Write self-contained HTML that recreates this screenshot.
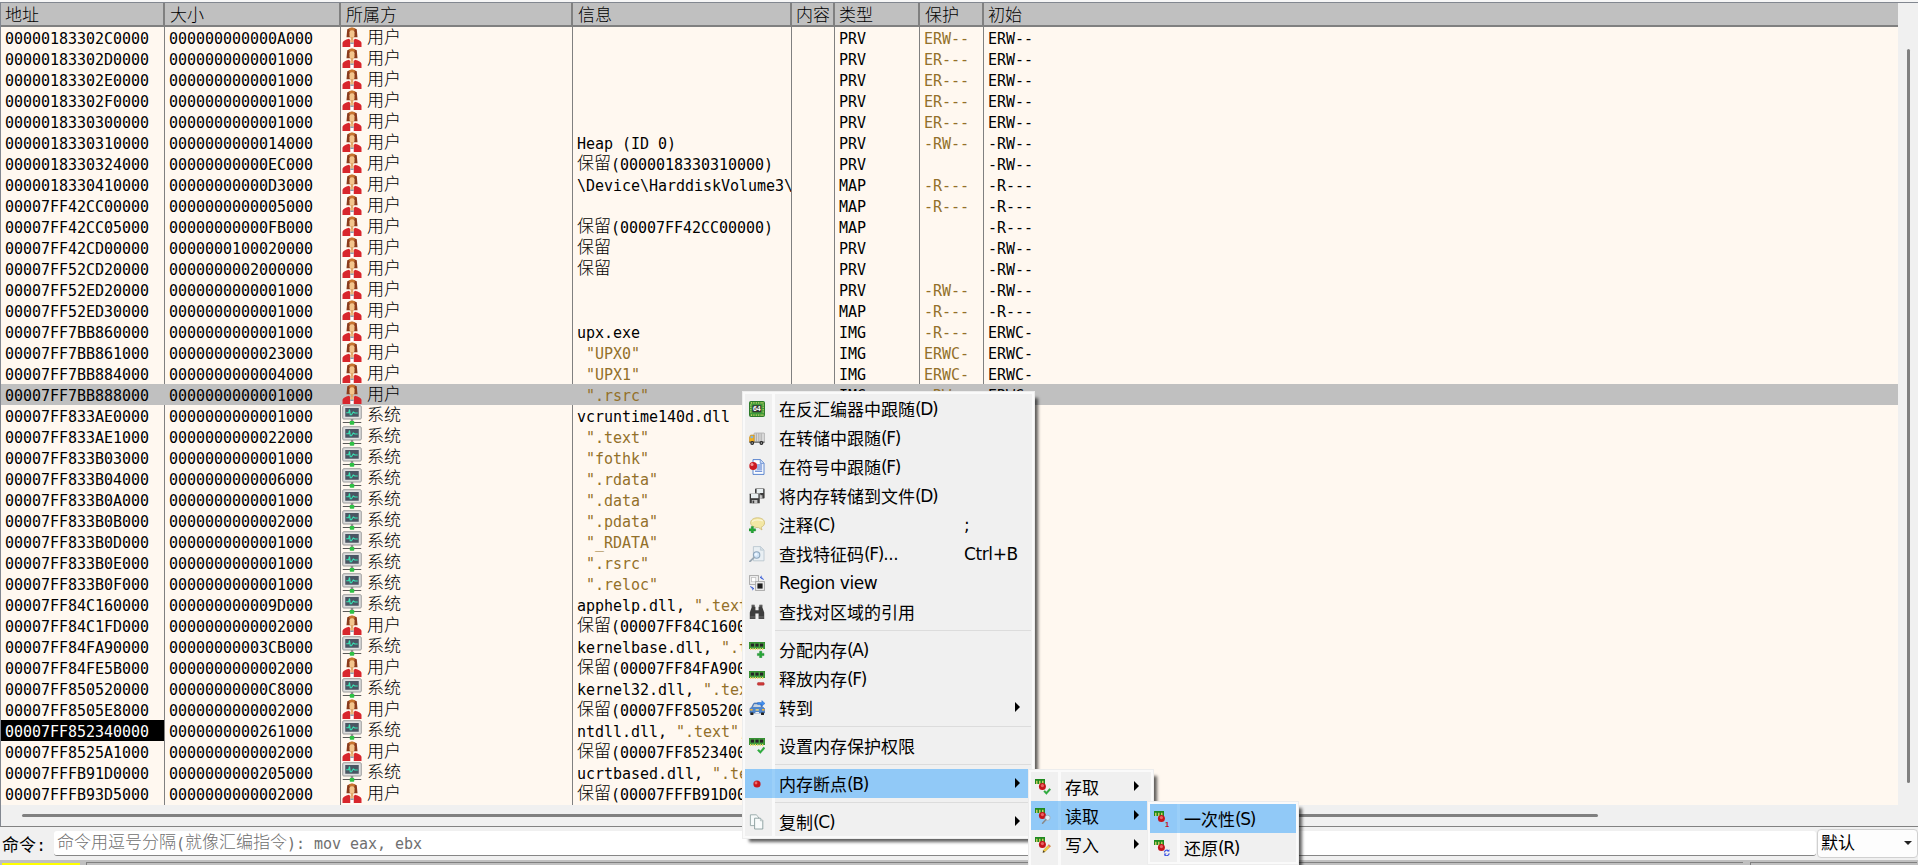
<!DOCTYPE html>
<html lang="zh-CN">
<head>
<meta charset="utf-8">
<title>x64dbg</title>
<style>
*{box-sizing:border-box;margin:0;padding:0}
html,body{width:1918px;height:865px;overflow:hidden;background:#f0f0f0}
body{position:relative;font-family:"DejaVu Sans Mono","Liberation Mono","Noto Sans CJK SC",monospace;font-size:15px;color:#000}
i{font-style:normal}
.c{font-family:"Noto Sans CJK SC",sans-serif;font-size:17px;font-weight:300;letter-spacing:0;line-height:0;position:relative;top:-1px}
#topstrip{position:absolute;left:0;top:0;width:1918px;height:3px;background:#f6f6f6}
#topline{position:absolute;left:0;top:2px;width:1918px;height:1px;background:#828790}
#table{position:absolute;left:0;top:3px;width:1898px;height:802px;background:#fff8f0;overflow:hidden}
#hdr{position:absolute;left:0;top:0;width:1898px;height:22px;background:#c0c0c0}
#hdrline{position:absolute;left:0;top:22px;width:1898px;height:2px;background:#808080}
.hs{position:absolute;top:0;width:2px;height:24px;background:#808080}
.ht{position:absolute;top:0;height:22px;line-height:21px;font-family:"Noto Sans CJK SC",sans-serif;font-size:17px;letter-spacing:0;font-weight:300;white-space:nowrap}
.vs{position:absolute;top:24px;width:1px;height:778px;background:#808080}
#leftb{position:absolute;left:0;top:3px;width:1px;height:824px;background:#828790}
.row{position:absolute;left:0;width:1898px;height:21px;line-height:24px;white-space:nowrap;letter-spacing:-0.03px}
.row.sel{background:#c0c0c0}
.row span{position:absolute;top:0;height:21px;overflow:hidden;padding-left:4px;white-space:pre}
.c0{left:1px;width:163px}
.c1{left:165px;width:175px}
.c2{left:341px;width:231px}
.c3{left:573px;width:218px}
.c4{left:792px;width:42px}
.c5{left:835px;width:84px}
.c6{left:920px;width:63px}
.c7{left:984px;width:914px}
.row span.c2{padding-left:1px}
.row span.sec,.sec{color:#93702a}
.row .c3 span{position:static;padding:0;display:inline;overflow:visible}
.cip{background:#000;color:#fff}
.ic{width:20px;height:20px;vertical-align:top;margin-right:5px;margin-top:0px}
#vsb{position:absolute;left:1898px;top:3px;width:20px;height:823px;background:#f0f0f0}
#vthumb{position:absolute;left:1907px;top:49px;width:3px;height:734px;background:#808080;border-radius:1.5px}
#hsb{position:absolute;left:1px;top:805px;width:1897px;height:21px;background:#f0f0f0}
#hthumb{position:absolute;left:22px;top:814px;width:1576px;height:3px;background:#808080;border-radius:1.5px}
#botline{position:absolute;left:0;top:826px;width:1918px;height:1px;background:#828282}
#cmdlabel{position:absolute;left:2px;top:834px;height:26px;line-height:26px;font-family:"Liberation Mono","Noto Sans CJK SC",sans-serif;font-size:17px;white-space:nowrap}
#cmdinput{position:absolute;left:54px;top:831px;width:1762px;height:25px;background:#fff;border-bottom:1px solid #868686;border-radius:3px;line-height:27px;padding-left:3px;color:#707070;white-space:nowrap;letter-spacing:-0.03px;overflow:hidden}
#combo{position:absolute;left:1817px;top:829px;width:101px;height:29px;background:#fdfdfd;border:1px solid #d0d0d0;border-radius:4px;font-family:"Liberation Sans","Noto Sans CJK SC",sans-serif;font-size:17px;line-height:28px;padding-left:3px}
#combo b{position:absolute;right:5px;top:11px;width:0;height:0;border-left:4px solid transparent;border-right:4px solid transparent;border-top:4px solid #222}
#status{position:absolute;left:0;top:860px;width:1918px;height:5px;background:#c0c0c0}
#sty{position:absolute;left:2px;top:863px;width:78px;height:2px;background:#ffff00}
#stg,#stg2{position:absolute;left:86px;top:862px;width:1657px;height:3px;background:#c0c0c0;border-top:1px solid #808080;border-left:1px solid #808080}
/* menus */
.menu{position:absolute;background:#f0f0f0;border:3px solid #fafafa;outline:0;box-shadow:5px 5px 3px -2px rgba(0,0,0,.62);font-family:"Liberation Sans","Noto Sans CJK SC",sans-serif;font-size:17px;color:#000}
.menu:before{content:"";position:absolute;left:-3px;top:-3px;right:-3px;bottom:-3px;border:1px solid #ededed;pointer-events:none}
.menu .gut{position:absolute;top:0;bottom:0;width:3px;background:#fafafa}
.mi{position:absolute;left:0;right:0;height:29px;line-height:29px;white-space:nowrap}
.mi.hl{background:#91c9f7}
.mi.hl:after{content:"";position:absolute;left:27px;top:0;width:3px;height:29px;background:#9bcff8}
.mi .t{position:absolute;left:34px;top:2px}
.mi .sc{position:absolute;left:219px;top:2px}
.mi .ar{position:absolute;right:12px;top:9px;width:0;height:0;border-top:5px solid transparent;border-bottom:5px solid transparent;border-left:5.5px solid #000}
.mi svg{position:absolute;left:4px;top:7px;width:16px;height:16px}
.ms{position:absolute;left:30px;right:1px;height:1px;background:#dcdcdc}
.lat{font-family:"DejaVu Sans","Liberation Sans",sans-serif;font-size:17px;letter-spacing:-0.4px;line-height:0;position:relative;top:-1.5px}
#stg2{left:1750px;width:167px}
.acc{letter-spacing:-1.3px}
</style>
</head>
<body>
<div id="topstrip"></div><div id="topline"></div>
<div id="table">
<div id="hdr"></div><div id="hdrline"></div>
<div class="hs" style="left:163px"></div><div class="hs" style="left:339px"></div><div class="hs" style="left:571px"></div><div class="hs" style="left:790px"></div><div class="hs" style="left:833px"></div><div class="hs" style="left:918px"></div><div class="hs" style="left:982px"></div>
<div class="ht" style="left:5px">地址</div><div class="ht" style="left:170px">大小</div><div class="ht" style="left:346px">所属方</div><div class="ht" style="left:578px">信息</div><div class="ht" style="left:796px">内容</div><div class="ht" style="left:839px">类型</div><div class="ht" style="left:925px">保护</div><div class="ht" style="left:988px">初始</div>
<div class="vs" style="left:164px"></div><div class="vs" style="left:340px"></div><div class="vs" style="left:572px"></div><div class="vs" style="left:791px"></div><div class="vs" style="left:834px"></div><div class="vs" style="left:919px"></div><div class="vs" style="left:983px"></div>
<div id="rows" style="position:absolute;left:0;top:-3px">
<div class="row" style="top:27px"><span class="c0">00000183302C0000</span><span class="c1">000000000000A000</span><span class="c2"><svg class="ic" viewBox="0 0 16 16"><path d="M4.2 1.8 Q8 -0.8 11.8 1.8 L12.4 8.2 L3.6 8.2 Z" fill="#8a3b1c"/><path d="M5.6 1 Q8 -0.2 10.4 1 L10 3 L6 3 Z" fill="#c8742e"/><rect x="6" y="2.6" width="4" height="6" rx="1.6" fill="#f3c58c"/><rect x="7" y="8" width="2" height="2.4" fill="#e0a868"/><path d="M0.4 16 L0.4 12.6 Q1 10.6 5.6 9.4 L8 12 L10.4 9.4 Q15 10.6 15.6 12.6 L15.6 16 Z" fill="#d8262d"/><path d="M6.6 10.6 L9.4 10.6 L9.4 16 L6.6 16 Z" fill="#ffffff"/><path d="M6.6 10.4 L9.4 10.4 L9.4 12.6 L6.6 12.6 Z" fill="#e9b47a"/><rect x="6.6" y="12.4" width="2.8" height="1.2" fill="#8fa0b0"/></svg><i class="c">用户</i></span><span class="c3"></span><span class="c4"></span><span class="c5">PRV</span><span class="c6 sec">ERW--</span><span class="c7">ERW--</span></div>
<div class="row" style="top:48px"><span class="c0">00000183302D0000</span><span class="c1">0000000000001000</span><span class="c2"><svg class="ic" viewBox="0 0 16 16"><path d="M4.2 1.8 Q8 -0.8 11.8 1.8 L12.4 8.2 L3.6 8.2 Z" fill="#8a3b1c"/><path d="M5.6 1 Q8 -0.2 10.4 1 L10 3 L6 3 Z" fill="#c8742e"/><rect x="6" y="2.6" width="4" height="6" rx="1.6" fill="#f3c58c"/><rect x="7" y="8" width="2" height="2.4" fill="#e0a868"/><path d="M0.4 16 L0.4 12.6 Q1 10.6 5.6 9.4 L8 12 L10.4 9.4 Q15 10.6 15.6 12.6 L15.6 16 Z" fill="#d8262d"/><path d="M6.6 10.6 L9.4 10.6 L9.4 16 L6.6 16 Z" fill="#ffffff"/><path d="M6.6 10.4 L9.4 10.4 L9.4 12.6 L6.6 12.6 Z" fill="#e9b47a"/><rect x="6.6" y="12.4" width="2.8" height="1.2" fill="#8fa0b0"/></svg><i class="c">用户</i></span><span class="c3"></span><span class="c4"></span><span class="c5">PRV</span><span class="c6 sec">ER---</span><span class="c7">ERW--</span></div>
<div class="row" style="top:69px"><span class="c0">00000183302E0000</span><span class="c1">0000000000001000</span><span class="c2"><svg class="ic" viewBox="0 0 16 16"><path d="M4.2 1.8 Q8 -0.8 11.8 1.8 L12.4 8.2 L3.6 8.2 Z" fill="#8a3b1c"/><path d="M5.6 1 Q8 -0.2 10.4 1 L10 3 L6 3 Z" fill="#c8742e"/><rect x="6" y="2.6" width="4" height="6" rx="1.6" fill="#f3c58c"/><rect x="7" y="8" width="2" height="2.4" fill="#e0a868"/><path d="M0.4 16 L0.4 12.6 Q1 10.6 5.6 9.4 L8 12 L10.4 9.4 Q15 10.6 15.6 12.6 L15.6 16 Z" fill="#d8262d"/><path d="M6.6 10.6 L9.4 10.6 L9.4 16 L6.6 16 Z" fill="#ffffff"/><path d="M6.6 10.4 L9.4 10.4 L9.4 12.6 L6.6 12.6 Z" fill="#e9b47a"/><rect x="6.6" y="12.4" width="2.8" height="1.2" fill="#8fa0b0"/></svg><i class="c">用户</i></span><span class="c3"></span><span class="c4"></span><span class="c5">PRV</span><span class="c6 sec">ER---</span><span class="c7">ERW--</span></div>
<div class="row" style="top:90px"><span class="c0">00000183302F0000</span><span class="c1">0000000000001000</span><span class="c2"><svg class="ic" viewBox="0 0 16 16"><path d="M4.2 1.8 Q8 -0.8 11.8 1.8 L12.4 8.2 L3.6 8.2 Z" fill="#8a3b1c"/><path d="M5.6 1 Q8 -0.2 10.4 1 L10 3 L6 3 Z" fill="#c8742e"/><rect x="6" y="2.6" width="4" height="6" rx="1.6" fill="#f3c58c"/><rect x="7" y="8" width="2" height="2.4" fill="#e0a868"/><path d="M0.4 16 L0.4 12.6 Q1 10.6 5.6 9.4 L8 12 L10.4 9.4 Q15 10.6 15.6 12.6 L15.6 16 Z" fill="#d8262d"/><path d="M6.6 10.6 L9.4 10.6 L9.4 16 L6.6 16 Z" fill="#ffffff"/><path d="M6.6 10.4 L9.4 10.4 L9.4 12.6 L6.6 12.6 Z" fill="#e9b47a"/><rect x="6.6" y="12.4" width="2.8" height="1.2" fill="#8fa0b0"/></svg><i class="c">用户</i></span><span class="c3"></span><span class="c4"></span><span class="c5">PRV</span><span class="c6 sec">ER---</span><span class="c7">ERW--</span></div>
<div class="row" style="top:111px"><span class="c0">0000018330300000</span><span class="c1">0000000000001000</span><span class="c2"><svg class="ic" viewBox="0 0 16 16"><path d="M4.2 1.8 Q8 -0.8 11.8 1.8 L12.4 8.2 L3.6 8.2 Z" fill="#8a3b1c"/><path d="M5.6 1 Q8 -0.2 10.4 1 L10 3 L6 3 Z" fill="#c8742e"/><rect x="6" y="2.6" width="4" height="6" rx="1.6" fill="#f3c58c"/><rect x="7" y="8" width="2" height="2.4" fill="#e0a868"/><path d="M0.4 16 L0.4 12.6 Q1 10.6 5.6 9.4 L8 12 L10.4 9.4 Q15 10.6 15.6 12.6 L15.6 16 Z" fill="#d8262d"/><path d="M6.6 10.6 L9.4 10.6 L9.4 16 L6.6 16 Z" fill="#ffffff"/><path d="M6.6 10.4 L9.4 10.4 L9.4 12.6 L6.6 12.6 Z" fill="#e9b47a"/><rect x="6.6" y="12.4" width="2.8" height="1.2" fill="#8fa0b0"/></svg><i class="c">用户</i></span><span class="c3"></span><span class="c4"></span><span class="c5">PRV</span><span class="c6 sec">ER---</span><span class="c7">ERW--</span></div>
<div class="row" style="top:132px"><span class="c0">0000018330310000</span><span class="c1">0000000000014000</span><span class="c2"><svg class="ic" viewBox="0 0 16 16"><path d="M4.2 1.8 Q8 -0.8 11.8 1.8 L12.4 8.2 L3.6 8.2 Z" fill="#8a3b1c"/><path d="M5.6 1 Q8 -0.2 10.4 1 L10 3 L6 3 Z" fill="#c8742e"/><rect x="6" y="2.6" width="4" height="6" rx="1.6" fill="#f3c58c"/><rect x="7" y="8" width="2" height="2.4" fill="#e0a868"/><path d="M0.4 16 L0.4 12.6 Q1 10.6 5.6 9.4 L8 12 L10.4 9.4 Q15 10.6 15.6 12.6 L15.6 16 Z" fill="#d8262d"/><path d="M6.6 10.6 L9.4 10.6 L9.4 16 L6.6 16 Z" fill="#ffffff"/><path d="M6.6 10.4 L9.4 10.4 L9.4 12.6 L6.6 12.6 Z" fill="#e9b47a"/><rect x="6.6" y="12.4" width="2.8" height="1.2" fill="#8fa0b0"/></svg><i class="c">用户</i></span><span class="c3">Heap (ID 0)</span><span class="c4"></span><span class="c5">PRV</span><span class="c6 sec">-RW--</span><span class="c7">-RW--</span></div>
<div class="row" style="top:153px"><span class="c0">0000018330324000</span><span class="c1">00000000000EC000</span><span class="c2"><svg class="ic" viewBox="0 0 16 16"><path d="M4.2 1.8 Q8 -0.8 11.8 1.8 L12.4 8.2 L3.6 8.2 Z" fill="#8a3b1c"/><path d="M5.6 1 Q8 -0.2 10.4 1 L10 3 L6 3 Z" fill="#c8742e"/><rect x="6" y="2.6" width="4" height="6" rx="1.6" fill="#f3c58c"/><rect x="7" y="8" width="2" height="2.4" fill="#e0a868"/><path d="M0.4 16 L0.4 12.6 Q1 10.6 5.6 9.4 L8 12 L10.4 9.4 Q15 10.6 15.6 12.6 L15.6 16 Z" fill="#d8262d"/><path d="M6.6 10.6 L9.4 10.6 L9.4 16 L6.6 16 Z" fill="#ffffff"/><path d="M6.6 10.4 L9.4 10.4 L9.4 12.6 L6.6 12.6 Z" fill="#e9b47a"/><rect x="6.6" y="12.4" width="2.8" height="1.2" fill="#8fa0b0"/></svg><i class="c">用户</i></span><span class="c3"><i class="c">保留</i>(0000018330310000)</span><span class="c4"></span><span class="c5">PRV</span><span class="c6 sec"></span><span class="c7">-RW--</span></div>
<div class="row" style="top:174px"><span class="c0">0000018330410000</span><span class="c1">00000000000D3000</span><span class="c2"><svg class="ic" viewBox="0 0 16 16"><path d="M4.2 1.8 Q8 -0.8 11.8 1.8 L12.4 8.2 L3.6 8.2 Z" fill="#8a3b1c"/><path d="M5.6 1 Q8 -0.2 10.4 1 L10 3 L6 3 Z" fill="#c8742e"/><rect x="6" y="2.6" width="4" height="6" rx="1.6" fill="#f3c58c"/><rect x="7" y="8" width="2" height="2.4" fill="#e0a868"/><path d="M0.4 16 L0.4 12.6 Q1 10.6 5.6 9.4 L8 12 L10.4 9.4 Q15 10.6 15.6 12.6 L15.6 16 Z" fill="#d8262d"/><path d="M6.6 10.6 L9.4 10.6 L9.4 16 L6.6 16 Z" fill="#ffffff"/><path d="M6.6 10.4 L9.4 10.4 L9.4 12.6 L6.6 12.6 Z" fill="#e9b47a"/><rect x="6.6" y="12.4" width="2.8" height="1.2" fill="#8fa0b0"/></svg><i class="c">用户</i></span><span class="c3">\Device\HarddiskVolume3\</span><span class="c4"></span><span class="c5">MAP</span><span class="c6 sec">-R---</span><span class="c7">-R---</span></div>
<div class="row" style="top:195px"><span class="c0">00007FF42CC00000</span><span class="c1">0000000000005000</span><span class="c2"><svg class="ic" viewBox="0 0 16 16"><path d="M4.2 1.8 Q8 -0.8 11.8 1.8 L12.4 8.2 L3.6 8.2 Z" fill="#8a3b1c"/><path d="M5.6 1 Q8 -0.2 10.4 1 L10 3 L6 3 Z" fill="#c8742e"/><rect x="6" y="2.6" width="4" height="6" rx="1.6" fill="#f3c58c"/><rect x="7" y="8" width="2" height="2.4" fill="#e0a868"/><path d="M0.4 16 L0.4 12.6 Q1 10.6 5.6 9.4 L8 12 L10.4 9.4 Q15 10.6 15.6 12.6 L15.6 16 Z" fill="#d8262d"/><path d="M6.6 10.6 L9.4 10.6 L9.4 16 L6.6 16 Z" fill="#ffffff"/><path d="M6.6 10.4 L9.4 10.4 L9.4 12.6 L6.6 12.6 Z" fill="#e9b47a"/><rect x="6.6" y="12.4" width="2.8" height="1.2" fill="#8fa0b0"/></svg><i class="c">用户</i></span><span class="c3"></span><span class="c4"></span><span class="c5">MAP</span><span class="c6 sec">-R---</span><span class="c7">-R---</span></div>
<div class="row" style="top:216px"><span class="c0">00007FF42CC05000</span><span class="c1">00000000000FB000</span><span class="c2"><svg class="ic" viewBox="0 0 16 16"><path d="M4.2 1.8 Q8 -0.8 11.8 1.8 L12.4 8.2 L3.6 8.2 Z" fill="#8a3b1c"/><path d="M5.6 1 Q8 -0.2 10.4 1 L10 3 L6 3 Z" fill="#c8742e"/><rect x="6" y="2.6" width="4" height="6" rx="1.6" fill="#f3c58c"/><rect x="7" y="8" width="2" height="2.4" fill="#e0a868"/><path d="M0.4 16 L0.4 12.6 Q1 10.6 5.6 9.4 L8 12 L10.4 9.4 Q15 10.6 15.6 12.6 L15.6 16 Z" fill="#d8262d"/><path d="M6.6 10.6 L9.4 10.6 L9.4 16 L6.6 16 Z" fill="#ffffff"/><path d="M6.6 10.4 L9.4 10.4 L9.4 12.6 L6.6 12.6 Z" fill="#e9b47a"/><rect x="6.6" y="12.4" width="2.8" height="1.2" fill="#8fa0b0"/></svg><i class="c">用户</i></span><span class="c3"><i class="c">保留</i>(00007FF42CC00000)</span><span class="c4"></span><span class="c5">MAP</span><span class="c6 sec"></span><span class="c7">-R---</span></div>
<div class="row" style="top:237px"><span class="c0">00007FF42CD00000</span><span class="c1">0000000100020000</span><span class="c2"><svg class="ic" viewBox="0 0 16 16"><path d="M4.2 1.8 Q8 -0.8 11.8 1.8 L12.4 8.2 L3.6 8.2 Z" fill="#8a3b1c"/><path d="M5.6 1 Q8 -0.2 10.4 1 L10 3 L6 3 Z" fill="#c8742e"/><rect x="6" y="2.6" width="4" height="6" rx="1.6" fill="#f3c58c"/><rect x="7" y="8" width="2" height="2.4" fill="#e0a868"/><path d="M0.4 16 L0.4 12.6 Q1 10.6 5.6 9.4 L8 12 L10.4 9.4 Q15 10.6 15.6 12.6 L15.6 16 Z" fill="#d8262d"/><path d="M6.6 10.6 L9.4 10.6 L9.4 16 L6.6 16 Z" fill="#ffffff"/><path d="M6.6 10.4 L9.4 10.4 L9.4 12.6 L6.6 12.6 Z" fill="#e9b47a"/><rect x="6.6" y="12.4" width="2.8" height="1.2" fill="#8fa0b0"/></svg><i class="c">用户</i></span><span class="c3"><i class="c">保留</i></span><span class="c4"></span><span class="c5">PRV</span><span class="c6 sec"></span><span class="c7">-RW--</span></div>
<div class="row" style="top:258px"><span class="c0">00007FF52CD20000</span><span class="c1">0000000002000000</span><span class="c2"><svg class="ic" viewBox="0 0 16 16"><path d="M4.2 1.8 Q8 -0.8 11.8 1.8 L12.4 8.2 L3.6 8.2 Z" fill="#8a3b1c"/><path d="M5.6 1 Q8 -0.2 10.4 1 L10 3 L6 3 Z" fill="#c8742e"/><rect x="6" y="2.6" width="4" height="6" rx="1.6" fill="#f3c58c"/><rect x="7" y="8" width="2" height="2.4" fill="#e0a868"/><path d="M0.4 16 L0.4 12.6 Q1 10.6 5.6 9.4 L8 12 L10.4 9.4 Q15 10.6 15.6 12.6 L15.6 16 Z" fill="#d8262d"/><path d="M6.6 10.6 L9.4 10.6 L9.4 16 L6.6 16 Z" fill="#ffffff"/><path d="M6.6 10.4 L9.4 10.4 L9.4 12.6 L6.6 12.6 Z" fill="#e9b47a"/><rect x="6.6" y="12.4" width="2.8" height="1.2" fill="#8fa0b0"/></svg><i class="c">用户</i></span><span class="c3"><i class="c">保留</i></span><span class="c4"></span><span class="c5">PRV</span><span class="c6 sec"></span><span class="c7">-RW--</span></div>
<div class="row" style="top:279px"><span class="c0">00007FF52ED20000</span><span class="c1">0000000000001000</span><span class="c2"><svg class="ic" viewBox="0 0 16 16"><path d="M4.2 1.8 Q8 -0.8 11.8 1.8 L12.4 8.2 L3.6 8.2 Z" fill="#8a3b1c"/><path d="M5.6 1 Q8 -0.2 10.4 1 L10 3 L6 3 Z" fill="#c8742e"/><rect x="6" y="2.6" width="4" height="6" rx="1.6" fill="#f3c58c"/><rect x="7" y="8" width="2" height="2.4" fill="#e0a868"/><path d="M0.4 16 L0.4 12.6 Q1 10.6 5.6 9.4 L8 12 L10.4 9.4 Q15 10.6 15.6 12.6 L15.6 16 Z" fill="#d8262d"/><path d="M6.6 10.6 L9.4 10.6 L9.4 16 L6.6 16 Z" fill="#ffffff"/><path d="M6.6 10.4 L9.4 10.4 L9.4 12.6 L6.6 12.6 Z" fill="#e9b47a"/><rect x="6.6" y="12.4" width="2.8" height="1.2" fill="#8fa0b0"/></svg><i class="c">用户</i></span><span class="c3"></span><span class="c4"></span><span class="c5">PRV</span><span class="c6 sec">-RW--</span><span class="c7">-RW--</span></div>
<div class="row" style="top:300px"><span class="c0">00007FF52ED30000</span><span class="c1">0000000000001000</span><span class="c2"><svg class="ic" viewBox="0 0 16 16"><path d="M4.2 1.8 Q8 -0.8 11.8 1.8 L12.4 8.2 L3.6 8.2 Z" fill="#8a3b1c"/><path d="M5.6 1 Q8 -0.2 10.4 1 L10 3 L6 3 Z" fill="#c8742e"/><rect x="6" y="2.6" width="4" height="6" rx="1.6" fill="#f3c58c"/><rect x="7" y="8" width="2" height="2.4" fill="#e0a868"/><path d="M0.4 16 L0.4 12.6 Q1 10.6 5.6 9.4 L8 12 L10.4 9.4 Q15 10.6 15.6 12.6 L15.6 16 Z" fill="#d8262d"/><path d="M6.6 10.6 L9.4 10.6 L9.4 16 L6.6 16 Z" fill="#ffffff"/><path d="M6.6 10.4 L9.4 10.4 L9.4 12.6 L6.6 12.6 Z" fill="#e9b47a"/><rect x="6.6" y="12.4" width="2.8" height="1.2" fill="#8fa0b0"/></svg><i class="c">用户</i></span><span class="c3"></span><span class="c4"></span><span class="c5">MAP</span><span class="c6 sec">-R---</span><span class="c7">-R---</span></div>
<div class="row" style="top:321px"><span class="c0">00007FF7BB860000</span><span class="c1">0000000000001000</span><span class="c2"><svg class="ic" viewBox="0 0 16 16"><path d="M4.2 1.8 Q8 -0.8 11.8 1.8 L12.4 8.2 L3.6 8.2 Z" fill="#8a3b1c"/><path d="M5.6 1 Q8 -0.2 10.4 1 L10 3 L6 3 Z" fill="#c8742e"/><rect x="6" y="2.6" width="4" height="6" rx="1.6" fill="#f3c58c"/><rect x="7" y="8" width="2" height="2.4" fill="#e0a868"/><path d="M0.4 16 L0.4 12.6 Q1 10.6 5.6 9.4 L8 12 L10.4 9.4 Q15 10.6 15.6 12.6 L15.6 16 Z" fill="#d8262d"/><path d="M6.6 10.6 L9.4 10.6 L9.4 16 L6.6 16 Z" fill="#ffffff"/><path d="M6.6 10.4 L9.4 10.4 L9.4 12.6 L6.6 12.6 Z" fill="#e9b47a"/><rect x="6.6" y="12.4" width="2.8" height="1.2" fill="#8fa0b0"/></svg><i class="c">用户</i></span><span class="c3">upx.exe</span><span class="c4"></span><span class="c5">IMG</span><span class="c6 sec">-R---</span><span class="c7">ERWC-</span></div>
<div class="row" style="top:342px"><span class="c0">00007FF7BB861000</span><span class="c1">0000000000023000</span><span class="c2"><svg class="ic" viewBox="0 0 16 16"><path d="M4.2 1.8 Q8 -0.8 11.8 1.8 L12.4 8.2 L3.6 8.2 Z" fill="#8a3b1c"/><path d="M5.6 1 Q8 -0.2 10.4 1 L10 3 L6 3 Z" fill="#c8742e"/><rect x="6" y="2.6" width="4" height="6" rx="1.6" fill="#f3c58c"/><rect x="7" y="8" width="2" height="2.4" fill="#e0a868"/><path d="M0.4 16 L0.4 12.6 Q1 10.6 5.6 9.4 L8 12 L10.4 9.4 Q15 10.6 15.6 12.6 L15.6 16 Z" fill="#d8262d"/><path d="M6.6 10.6 L9.4 10.6 L9.4 16 L6.6 16 Z" fill="#ffffff"/><path d="M6.6 10.4 L9.4 10.4 L9.4 12.6 L6.6 12.6 Z" fill="#e9b47a"/><rect x="6.6" y="12.4" width="2.8" height="1.2" fill="#8fa0b0"/></svg><i class="c">用户</i></span><span class="c3">&nbsp;<span class="sec">"UPX0"</span></span><span class="c4"></span><span class="c5">IMG</span><span class="c6 sec">ERWC-</span><span class="c7">ERWC-</span></div>
<div class="row" style="top:363px"><span class="c0">00007FF7BB884000</span><span class="c1">0000000000004000</span><span class="c2"><svg class="ic" viewBox="0 0 16 16"><path d="M4.2 1.8 Q8 -0.8 11.8 1.8 L12.4 8.2 L3.6 8.2 Z" fill="#8a3b1c"/><path d="M5.6 1 Q8 -0.2 10.4 1 L10 3 L6 3 Z" fill="#c8742e"/><rect x="6" y="2.6" width="4" height="6" rx="1.6" fill="#f3c58c"/><rect x="7" y="8" width="2" height="2.4" fill="#e0a868"/><path d="M0.4 16 L0.4 12.6 Q1 10.6 5.6 9.4 L8 12 L10.4 9.4 Q15 10.6 15.6 12.6 L15.6 16 Z" fill="#d8262d"/><path d="M6.6 10.6 L9.4 10.6 L9.4 16 L6.6 16 Z" fill="#ffffff"/><path d="M6.6 10.4 L9.4 10.4 L9.4 12.6 L6.6 12.6 Z" fill="#e9b47a"/><rect x="6.6" y="12.4" width="2.8" height="1.2" fill="#8fa0b0"/></svg><i class="c">用户</i></span><span class="c3">&nbsp;<span class="sec">"UPX1"</span></span><span class="c4"></span><span class="c5">IMG</span><span class="c6 sec">ERWC-</span><span class="c7">ERWC-</span></div>
<div class="row sel" style="top:384px"><span class="c0">00007FF7BB888000</span><span class="c1">0000000000001000</span><span class="c2"><svg class="ic" viewBox="0 0 16 16"><path d="M4.2 1.8 Q8 -0.8 11.8 1.8 L12.4 8.2 L3.6 8.2 Z" fill="#8a3b1c"/><path d="M5.6 1 Q8 -0.2 10.4 1 L10 3 L6 3 Z" fill="#c8742e"/><rect x="6" y="2.6" width="4" height="6" rx="1.6" fill="#f3c58c"/><rect x="7" y="8" width="2" height="2.4" fill="#e0a868"/><path d="M0.4 16 L0.4 12.6 Q1 10.6 5.6 9.4 L8 12 L10.4 9.4 Q15 10.6 15.6 12.6 L15.6 16 Z" fill="#d8262d"/><path d="M6.6 10.6 L9.4 10.6 L9.4 16 L6.6 16 Z" fill="#ffffff"/><path d="M6.6 10.4 L9.4 10.4 L9.4 12.6 L6.6 12.6 Z" fill="#e9b47a"/><rect x="6.6" y="12.4" width="2.8" height="1.2" fill="#8fa0b0"/></svg><i class="c">用户</i></span><span class="c3">&nbsp;<span class="sec">".rsrc"</span></span><span class="c4"></span><span class="c5">IMG</span><span class="c6 sec">-RW--</span><span class="c7">ERWC-</span></div>
<div class="row" style="top:405px"><span class="c0">00007FF833AE0000</span><span class="c1">0000000000001000</span><span class="c2"><svg class="ic" viewBox="0 0 16 16"><rect x="0.6" y="0.6" width="14.8" height="10.6" rx="0.8" fill="#dedede" stroke="#9a9a9a" stroke-width="0.8"/><rect x="2.6" y="2.4" width="10.8" height="7" fill="#4b5563"/><path d="M3.4 6.2 L5.4 6.2 L6 3.6 L6.6 7.8 L7.6 7.8 L9 5.6 L10.2 6.4 L12.6 6.4" fill="none" stroke="#38e2b4" stroke-width="0.9"/><rect x="7" y="11.2" width="2" height="2" fill="#8c8c8c"/><rect x="0.6" y="13.7" width="14.8" height="0.7" fill="#444"/><rect x="6.2" y="12.8" width="3.6" height="3" rx="0.6" fill="#2fc145"/></svg><i class="c">系统</i></span><span class="c3">vcruntime140d.dll</span><span class="c4"></span><span class="c5">IMG</span><span class="c6 sec">-R---</span><span class="c7">ERWC-</span></div>
<div class="row" style="top:426px"><span class="c0">00007FF833AE1000</span><span class="c1">0000000000022000</span><span class="c2"><svg class="ic" viewBox="0 0 16 16"><rect x="0.6" y="0.6" width="14.8" height="10.6" rx="0.8" fill="#dedede" stroke="#9a9a9a" stroke-width="0.8"/><rect x="2.6" y="2.4" width="10.8" height="7" fill="#4b5563"/><path d="M3.4 6.2 L5.4 6.2 L6 3.6 L6.6 7.8 L7.6 7.8 L9 5.6 L10.2 6.4 L12.6 6.4" fill="none" stroke="#38e2b4" stroke-width="0.9"/><rect x="7" y="11.2" width="2" height="2" fill="#8c8c8c"/><rect x="0.6" y="13.7" width="14.8" height="0.7" fill="#444"/><rect x="6.2" y="12.8" width="3.6" height="3" rx="0.6" fill="#2fc145"/></svg><i class="c">系统</i></span><span class="c3">&nbsp;<span class="sec">".text"</span></span><span class="c4"></span><span class="c5">IMG</span><span class="c6 sec">ER---</span><span class="c7">ERWC-</span></div>
<div class="row" style="top:447px"><span class="c0">00007FF833B03000</span><span class="c1">0000000000001000</span><span class="c2"><svg class="ic" viewBox="0 0 16 16"><rect x="0.6" y="0.6" width="14.8" height="10.6" rx="0.8" fill="#dedede" stroke="#9a9a9a" stroke-width="0.8"/><rect x="2.6" y="2.4" width="10.8" height="7" fill="#4b5563"/><path d="M3.4 6.2 L5.4 6.2 L6 3.6 L6.6 7.8 L7.6 7.8 L9 5.6 L10.2 6.4 L12.6 6.4" fill="none" stroke="#38e2b4" stroke-width="0.9"/><rect x="7" y="11.2" width="2" height="2" fill="#8c8c8c"/><rect x="0.6" y="13.7" width="14.8" height="0.7" fill="#444"/><rect x="6.2" y="12.8" width="3.6" height="3" rx="0.6" fill="#2fc145"/></svg><i class="c">系统</i></span><span class="c3">&nbsp;<span class="sec">"fothk"</span></span><span class="c4"></span><span class="c5">IMG</span><span class="c6 sec">ER---</span><span class="c7">ERWC-</span></div>
<div class="row" style="top:468px"><span class="c0">00007FF833B04000</span><span class="c1">0000000000006000</span><span class="c2"><svg class="ic" viewBox="0 0 16 16"><rect x="0.6" y="0.6" width="14.8" height="10.6" rx="0.8" fill="#dedede" stroke="#9a9a9a" stroke-width="0.8"/><rect x="2.6" y="2.4" width="10.8" height="7" fill="#4b5563"/><path d="M3.4 6.2 L5.4 6.2 L6 3.6 L6.6 7.8 L7.6 7.8 L9 5.6 L10.2 6.4 L12.6 6.4" fill="none" stroke="#38e2b4" stroke-width="0.9"/><rect x="7" y="11.2" width="2" height="2" fill="#8c8c8c"/><rect x="0.6" y="13.7" width="14.8" height="0.7" fill="#444"/><rect x="6.2" y="12.8" width="3.6" height="3" rx="0.6" fill="#2fc145"/></svg><i class="c">系统</i></span><span class="c3">&nbsp;<span class="sec">".rdata"</span></span><span class="c4"></span><span class="c5">IMG</span><span class="c6 sec">-R---</span><span class="c7">ERWC-</span></div>
<div class="row" style="top:489px"><span class="c0">00007FF833B0A000</span><span class="c1">0000000000001000</span><span class="c2"><svg class="ic" viewBox="0 0 16 16"><rect x="0.6" y="0.6" width="14.8" height="10.6" rx="0.8" fill="#dedede" stroke="#9a9a9a" stroke-width="0.8"/><rect x="2.6" y="2.4" width="10.8" height="7" fill="#4b5563"/><path d="M3.4 6.2 L5.4 6.2 L6 3.6 L6.6 7.8 L7.6 7.8 L9 5.6 L10.2 6.4 L12.6 6.4" fill="none" stroke="#38e2b4" stroke-width="0.9"/><rect x="7" y="11.2" width="2" height="2" fill="#8c8c8c"/><rect x="0.6" y="13.7" width="14.8" height="0.7" fill="#444"/><rect x="6.2" y="12.8" width="3.6" height="3" rx="0.6" fill="#2fc145"/></svg><i class="c">系统</i></span><span class="c3">&nbsp;<span class="sec">".data"</span></span><span class="c4"></span><span class="c5">IMG</span><span class="c6 sec">-RW--</span><span class="c7">ERWC-</span></div>
<div class="row" style="top:510px"><span class="c0">00007FF833B0B000</span><span class="c1">0000000000002000</span><span class="c2"><svg class="ic" viewBox="0 0 16 16"><rect x="0.6" y="0.6" width="14.8" height="10.6" rx="0.8" fill="#dedede" stroke="#9a9a9a" stroke-width="0.8"/><rect x="2.6" y="2.4" width="10.8" height="7" fill="#4b5563"/><path d="M3.4 6.2 L5.4 6.2 L6 3.6 L6.6 7.8 L7.6 7.8 L9 5.6 L10.2 6.4 L12.6 6.4" fill="none" stroke="#38e2b4" stroke-width="0.9"/><rect x="7" y="11.2" width="2" height="2" fill="#8c8c8c"/><rect x="0.6" y="13.7" width="14.8" height="0.7" fill="#444"/><rect x="6.2" y="12.8" width="3.6" height="3" rx="0.6" fill="#2fc145"/></svg><i class="c">系统</i></span><span class="c3">&nbsp;<span class="sec">".pdata"</span></span><span class="c4"></span><span class="c5">IMG</span><span class="c6 sec">-R---</span><span class="c7">ERWC-</span></div>
<div class="row" style="top:531px"><span class="c0">00007FF833B0D000</span><span class="c1">0000000000001000</span><span class="c2"><svg class="ic" viewBox="0 0 16 16"><rect x="0.6" y="0.6" width="14.8" height="10.6" rx="0.8" fill="#dedede" stroke="#9a9a9a" stroke-width="0.8"/><rect x="2.6" y="2.4" width="10.8" height="7" fill="#4b5563"/><path d="M3.4 6.2 L5.4 6.2 L6 3.6 L6.6 7.8 L7.6 7.8 L9 5.6 L10.2 6.4 L12.6 6.4" fill="none" stroke="#38e2b4" stroke-width="0.9"/><rect x="7" y="11.2" width="2" height="2" fill="#8c8c8c"/><rect x="0.6" y="13.7" width="14.8" height="0.7" fill="#444"/><rect x="6.2" y="12.8" width="3.6" height="3" rx="0.6" fill="#2fc145"/></svg><i class="c">系统</i></span><span class="c3">&nbsp;<span class="sec">"_RDATA"</span></span><span class="c4"></span><span class="c5">IMG</span><span class="c6 sec">-R---</span><span class="c7">ERWC-</span></div>
<div class="row" style="top:552px"><span class="c0">00007FF833B0E000</span><span class="c1">0000000000001000</span><span class="c2"><svg class="ic" viewBox="0 0 16 16"><rect x="0.6" y="0.6" width="14.8" height="10.6" rx="0.8" fill="#dedede" stroke="#9a9a9a" stroke-width="0.8"/><rect x="2.6" y="2.4" width="10.8" height="7" fill="#4b5563"/><path d="M3.4 6.2 L5.4 6.2 L6 3.6 L6.6 7.8 L7.6 7.8 L9 5.6 L10.2 6.4 L12.6 6.4" fill="none" stroke="#38e2b4" stroke-width="0.9"/><rect x="7" y="11.2" width="2" height="2" fill="#8c8c8c"/><rect x="0.6" y="13.7" width="14.8" height="0.7" fill="#444"/><rect x="6.2" y="12.8" width="3.6" height="3" rx="0.6" fill="#2fc145"/></svg><i class="c">系统</i></span><span class="c3">&nbsp;<span class="sec">".rsrc"</span></span><span class="c4"></span><span class="c5">IMG</span><span class="c6 sec">-R---</span><span class="c7">ERWC-</span></div>
<div class="row" style="top:573px"><span class="c0">00007FF833B0F000</span><span class="c1">0000000000001000</span><span class="c2"><svg class="ic" viewBox="0 0 16 16"><rect x="0.6" y="0.6" width="14.8" height="10.6" rx="0.8" fill="#dedede" stroke="#9a9a9a" stroke-width="0.8"/><rect x="2.6" y="2.4" width="10.8" height="7" fill="#4b5563"/><path d="M3.4 6.2 L5.4 6.2 L6 3.6 L6.6 7.8 L7.6 7.8 L9 5.6 L10.2 6.4 L12.6 6.4" fill="none" stroke="#38e2b4" stroke-width="0.9"/><rect x="7" y="11.2" width="2" height="2" fill="#8c8c8c"/><rect x="0.6" y="13.7" width="14.8" height="0.7" fill="#444"/><rect x="6.2" y="12.8" width="3.6" height="3" rx="0.6" fill="#2fc145"/></svg><i class="c">系统</i></span><span class="c3">&nbsp;<span class="sec">".reloc"</span></span><span class="c4"></span><span class="c5">IMG</span><span class="c6 sec">-R---</span><span class="c7">ERWC-</span></div>
<div class="row" style="top:594px"><span class="c0">00007FF84C160000</span><span class="c1">000000000009D000</span><span class="c2"><svg class="ic" viewBox="0 0 16 16"><rect x="0.6" y="0.6" width="14.8" height="10.6" rx="0.8" fill="#dedede" stroke="#9a9a9a" stroke-width="0.8"/><rect x="2.6" y="2.4" width="10.8" height="7" fill="#4b5563"/><path d="M3.4 6.2 L5.4 6.2 L6 3.6 L6.6 7.8 L7.6 7.8 L9 5.6 L10.2 6.4 L12.6 6.4" fill="none" stroke="#38e2b4" stroke-width="0.9"/><rect x="7" y="11.2" width="2" height="2" fill="#8c8c8c"/><rect x="0.6" y="13.7" width="14.8" height="0.7" fill="#444"/><rect x="6.2" y="12.8" width="3.6" height="3" rx="0.6" fill="#2fc145"/></svg><i class="c">系统</i></span><span class="c3">apphelp.dll,&nbsp;<span class="sec">".text"</span></span><span class="c4"></span><span class="c5">IMG</span><span class="c6 sec">ER---</span><span class="c7">ERWC-</span></div>
<div class="row" style="top:615px"><span class="c0">00007FF84C1FD000</span><span class="c1">0000000000002000</span><span class="c2"><svg class="ic" viewBox="0 0 16 16"><path d="M4.2 1.8 Q8 -0.8 11.8 1.8 L12.4 8.2 L3.6 8.2 Z" fill="#8a3b1c"/><path d="M5.6 1 Q8 -0.2 10.4 1 L10 3 L6 3 Z" fill="#c8742e"/><rect x="6" y="2.6" width="4" height="6" rx="1.6" fill="#f3c58c"/><rect x="7" y="8" width="2" height="2.4" fill="#e0a868"/><path d="M0.4 16 L0.4 12.6 Q1 10.6 5.6 9.4 L8 12 L10.4 9.4 Q15 10.6 15.6 12.6 L15.6 16 Z" fill="#d8262d"/><path d="M6.6 10.6 L9.4 10.6 L9.4 16 L6.6 16 Z" fill="#ffffff"/><path d="M6.6 10.4 L9.4 10.4 L9.4 12.6 L6.6 12.6 Z" fill="#e9b47a"/><rect x="6.6" y="12.4" width="2.8" height="1.2" fill="#8fa0b0"/></svg><i class="c">用户</i></span><span class="c3"><i class="c">保留</i>(00007FF84C160000)</span><span class="c4"></span><span class="c5">IMG</span><span class="c6 sec"></span><span class="c7">ERWC-</span></div>
<div class="row" style="top:636px"><span class="c0">00007FF84FA90000</span><span class="c1">00000000003CB000</span><span class="c2"><svg class="ic" viewBox="0 0 16 16"><rect x="0.6" y="0.6" width="14.8" height="10.6" rx="0.8" fill="#dedede" stroke="#9a9a9a" stroke-width="0.8"/><rect x="2.6" y="2.4" width="10.8" height="7" fill="#4b5563"/><path d="M3.4 6.2 L5.4 6.2 L6 3.6 L6.6 7.8 L7.6 7.8 L9 5.6 L10.2 6.4 L12.6 6.4" fill="none" stroke="#38e2b4" stroke-width="0.9"/><rect x="7" y="11.2" width="2" height="2" fill="#8c8c8c"/><rect x="0.6" y="13.7" width="14.8" height="0.7" fill="#444"/><rect x="6.2" y="12.8" width="3.6" height="3" rx="0.6" fill="#2fc145"/></svg><i class="c">系统</i></span><span class="c3">kernelbase.dll,&nbsp;<span class="sec">".text"</span></span><span class="c4"></span><span class="c5">IMG</span><span class="c6 sec">ER---</span><span class="c7">ERWC-</span></div>
<div class="row" style="top:657px"><span class="c0">00007FF84FE5B000</span><span class="c1">0000000000002000</span><span class="c2"><svg class="ic" viewBox="0 0 16 16"><path d="M4.2 1.8 Q8 -0.8 11.8 1.8 L12.4 8.2 L3.6 8.2 Z" fill="#8a3b1c"/><path d="M5.6 1 Q8 -0.2 10.4 1 L10 3 L6 3 Z" fill="#c8742e"/><rect x="6" y="2.6" width="4" height="6" rx="1.6" fill="#f3c58c"/><rect x="7" y="8" width="2" height="2.4" fill="#e0a868"/><path d="M0.4 16 L0.4 12.6 Q1 10.6 5.6 9.4 L8 12 L10.4 9.4 Q15 10.6 15.6 12.6 L15.6 16 Z" fill="#d8262d"/><path d="M6.6 10.6 L9.4 10.6 L9.4 16 L6.6 16 Z" fill="#ffffff"/><path d="M6.6 10.4 L9.4 10.4 L9.4 12.6 L6.6 12.6 Z" fill="#e9b47a"/><rect x="6.6" y="12.4" width="2.8" height="1.2" fill="#8fa0b0"/></svg><i class="c">用户</i></span><span class="c3"><i class="c">保留</i>(00007FF84FA90000)</span><span class="c4"></span><span class="c5">IMG</span><span class="c6 sec"></span><span class="c7">ERWC-</span></div>
<div class="row" style="top:678px"><span class="c0">00007FF850520000</span><span class="c1">00000000000C8000</span><span class="c2"><svg class="ic" viewBox="0 0 16 16"><rect x="0.6" y="0.6" width="14.8" height="10.6" rx="0.8" fill="#dedede" stroke="#9a9a9a" stroke-width="0.8"/><rect x="2.6" y="2.4" width="10.8" height="7" fill="#4b5563"/><path d="M3.4 6.2 L5.4 6.2 L6 3.6 L6.6 7.8 L7.6 7.8 L9 5.6 L10.2 6.4 L12.6 6.4" fill="none" stroke="#38e2b4" stroke-width="0.9"/><rect x="7" y="11.2" width="2" height="2" fill="#8c8c8c"/><rect x="0.6" y="13.7" width="14.8" height="0.7" fill="#444"/><rect x="6.2" y="12.8" width="3.6" height="3" rx="0.6" fill="#2fc145"/></svg><i class="c">系统</i></span><span class="c3">kernel32.dll,&nbsp;<span class="sec">".text"</span></span><span class="c4"></span><span class="c5">IMG</span><span class="c6 sec">ER---</span><span class="c7">ERWC-</span></div>
<div class="row" style="top:699px"><span class="c0">00007FF8505E8000</span><span class="c1">0000000000002000</span><span class="c2"><svg class="ic" viewBox="0 0 16 16"><path d="M4.2 1.8 Q8 -0.8 11.8 1.8 L12.4 8.2 L3.6 8.2 Z" fill="#8a3b1c"/><path d="M5.6 1 Q8 -0.2 10.4 1 L10 3 L6 3 Z" fill="#c8742e"/><rect x="6" y="2.6" width="4" height="6" rx="1.6" fill="#f3c58c"/><rect x="7" y="8" width="2" height="2.4" fill="#e0a868"/><path d="M0.4 16 L0.4 12.6 Q1 10.6 5.6 9.4 L8 12 L10.4 9.4 Q15 10.6 15.6 12.6 L15.6 16 Z" fill="#d8262d"/><path d="M6.6 10.6 L9.4 10.6 L9.4 16 L6.6 16 Z" fill="#ffffff"/><path d="M6.6 10.4 L9.4 10.4 L9.4 12.6 L6.6 12.6 Z" fill="#e9b47a"/><rect x="6.6" y="12.4" width="2.8" height="1.2" fill="#8fa0b0"/></svg><i class="c">用户</i></span><span class="c3"><i class="c">保留</i>(00007FF850520000)</span><span class="c4"></span><span class="c5">IMG</span><span class="c6 sec"></span><span class="c7">ERWC-</span></div>
<div class="row" style="top:720px"><span class="c0 cip">00007FF852340000</span><span class="c1">0000000000261000</span><span class="c2"><svg class="ic" viewBox="0 0 16 16"><rect x="0.6" y="0.6" width="14.8" height="10.6" rx="0.8" fill="#dedede" stroke="#9a9a9a" stroke-width="0.8"/><rect x="2.6" y="2.4" width="10.8" height="7" fill="#4b5563"/><path d="M3.4 6.2 L5.4 6.2 L6 3.6 L6.6 7.8 L7.6 7.8 L9 5.6 L10.2 6.4 L12.6 6.4" fill="none" stroke="#38e2b4" stroke-width="0.9"/><rect x="7" y="11.2" width="2" height="2" fill="#8c8c8c"/><rect x="0.6" y="13.7" width="14.8" height="0.7" fill="#444"/><rect x="6.2" y="12.8" width="3.6" height="3" rx="0.6" fill="#2fc145"/></svg><i class="c">系统</i></span><span class="c3">ntdll.dll,&nbsp;<span class="sec">".text", "</span></span><span class="c4"></span><span class="c5">IMG</span><span class="c6 sec">ER---</span><span class="c7">ERWC-</span></div>
<div class="row" style="top:741px"><span class="c0">00007FF8525A1000</span><span class="c1">0000000000002000</span><span class="c2"><svg class="ic" viewBox="0 0 16 16"><path d="M4.2 1.8 Q8 -0.8 11.8 1.8 L12.4 8.2 L3.6 8.2 Z" fill="#8a3b1c"/><path d="M5.6 1 Q8 -0.2 10.4 1 L10 3 L6 3 Z" fill="#c8742e"/><rect x="6" y="2.6" width="4" height="6" rx="1.6" fill="#f3c58c"/><rect x="7" y="8" width="2" height="2.4" fill="#e0a868"/><path d="M0.4 16 L0.4 12.6 Q1 10.6 5.6 9.4 L8 12 L10.4 9.4 Q15 10.6 15.6 12.6 L15.6 16 Z" fill="#d8262d"/><path d="M6.6 10.6 L9.4 10.6 L9.4 16 L6.6 16 Z" fill="#ffffff"/><path d="M6.6 10.4 L9.4 10.4 L9.4 12.6 L6.6 12.6 Z" fill="#e9b47a"/><rect x="6.6" y="12.4" width="2.8" height="1.2" fill="#8fa0b0"/></svg><i class="c">用户</i></span><span class="c3"><i class="c">保留</i>(00007FF852340000)</span><span class="c4"></span><span class="c5">IMG</span><span class="c6 sec"></span><span class="c7">ERWC-</span></div>
<div class="row" style="top:762px"><span class="c0">00007FFFB91D0000</span><span class="c1">0000000000205000</span><span class="c2"><svg class="ic" viewBox="0 0 16 16"><rect x="0.6" y="0.6" width="14.8" height="10.6" rx="0.8" fill="#dedede" stroke="#9a9a9a" stroke-width="0.8"/><rect x="2.6" y="2.4" width="10.8" height="7" fill="#4b5563"/><path d="M3.4 6.2 L5.4 6.2 L6 3.6 L6.6 7.8 L7.6 7.8 L9 5.6 L10.2 6.4 L12.6 6.4" fill="none" stroke="#38e2b4" stroke-width="0.9"/><rect x="7" y="11.2" width="2" height="2" fill="#8c8c8c"/><rect x="0.6" y="13.7" width="14.8" height="0.7" fill="#444"/><rect x="6.2" y="12.8" width="3.6" height="3" rx="0.6" fill="#2fc145"/></svg><i class="c">系统</i></span><span class="c3">ucrtbased.dll,&nbsp;<span class="sec">".text"</span></span><span class="c4"></span><span class="c5">IMG</span><span class="c6 sec">ER---</span><span class="c7">ERWC-</span></div>
<div class="row" style="top:783px"><span class="c0">00007FFFB93D5000</span><span class="c1">0000000000002000</span><span class="c2"><svg class="ic" viewBox="0 0 16 16"><path d="M4.2 1.8 Q8 -0.8 11.8 1.8 L12.4 8.2 L3.6 8.2 Z" fill="#8a3b1c"/><path d="M5.6 1 Q8 -0.2 10.4 1 L10 3 L6 3 Z" fill="#c8742e"/><rect x="6" y="2.6" width="4" height="6" rx="1.6" fill="#f3c58c"/><rect x="7" y="8" width="2" height="2.4" fill="#e0a868"/><path d="M0.4 16 L0.4 12.6 Q1 10.6 5.6 9.4 L8 12 L10.4 9.4 Q15 10.6 15.6 12.6 L15.6 16 Z" fill="#d8262d"/><path d="M6.6 10.6 L9.4 10.6 L9.4 16 L6.6 16 Z" fill="#ffffff"/><path d="M6.6 10.4 L9.4 10.4 L9.4 12.6 L6.6 12.6 Z" fill="#e9b47a"/><rect x="6.6" y="12.4" width="2.8" height="1.2" fill="#8fa0b0"/></svg><i class="c">用户</i></span><span class="c3"><i class="c">保留</i>(00007FFFB91D0000)</span><span class="c4"></span><span class="c5">IMG</span><span class="c6 sec"></span><span class="c7">ERWC-</span></div>

</div>
</div>
<div id="leftb"></div>
<div id="vsb"></div><div id="vthumb"></div>
<div id="hsb"></div><div id="hthumb"></div>
<div id="botline"></div>
<div id="cmdlabel">命令:</div>
<div id="cmdinput"><i class="c">命令用逗号分隔</i>(<i class="c">就像汇编指令</i>): mov eax, ebx</div>
<div id="combo">默认<b></b></div>
<div id="status"></div><div id="sty"></div><div id="stg"></div><div id="stg2"></div>
<div class="menu" id="m0" style="left:742px;top:391px;width:293px;height:448px"><div class="gut" style="left:27px"></div><div class="mi" style="top:0px"><svg viewBox="0 0 16 16"><rect x="0.5" y="0.5" width="15" height="15" rx="1" fill="#3f9a3a" stroke="#2c7a2a"/><path d="M2 1.2h1v1.2H2zM4.4 1.2h1v1.2h-1zM6.8 1.2h1v1.2h-1zM9.2 1.2h1v1.2h-1zM11.6 1.2h1v1.2h-1zM13.4 1.2h1v1.2h-1zM2 13.6h1v1.2H2zM4.4 13.6h1v1.2h-1zM6.8 13.6h1v1.2h-1zM9.2 13.6h1v1.2h-1zM11.6 13.6h1v1.2h-1zM13.4 13.6h1v1.2h-1zM1.2 3.4h1.2v1H1.2zM1.2 5.8h1.2v1H1.2zM1.2 8.2h1.2v1H1.2zM1.2 10.6h1.2v1H1.2zM13.6 3.4h1.2v1h-1.2zM13.6 5.8h1.2v1h-1.2zM13.6 8.2h1.2v1h-1.2zM13.6 10.6h1.2v1h-1.2z" fill="#e8dc70"/><rect x="3.4" y="4.2" width="8.8" height="7" rx="0.6" fill="#333"/><text x="7.8" y="10.4" font-family="Liberation Sans,sans-serif" font-size="7" font-weight="bold" fill="#fff" text-anchor="middle" letter-spacing="-0.2">64</text></svg><span class="t" style="left:34px">在反汇编器中跟随<i class="lat acc">(D)</i></span></div><div class="mi" style="top:29px"><svg viewBox="0 0 16 16"><rect x="5" y="3" width="10.6" height="9" rx="0.8" fill="#d8d8d8" stroke="#9a9a9a" stroke-width="0.6"/><path d="M7.4 3.4v8.2M9.8 3.4v8.2M12.2 3.4v8.2" stroke="#a8a8a8" stroke-width="0.9"/><path d="M0.4 12V7.4L1.6 5h3.6v7z" fill="#f2b01e" stroke="#b87a10" stroke-width="0.5"/><rect x="1.6" y="5.8" width="2.6" height="2.4" fill="#7fb4e8"/><rect x="0.2" y="11.6" width="15.4" height="1.2" fill="#666"/><circle cx="3.2" cy="13" r="1.9" fill="#222"/><circle cx="3.2" cy="13" r="0.8" fill="#c0c0c0"/><circle cx="12.4" cy="13" r="1.9" fill="#222"/><circle cx="12.4" cy="13" r="0.8" fill="#c0c0c0"/></svg><span class="t" style="left:34px">在转储中跟随<i class="lat acc">(F)</i></span></div><div class="mi" style="top:58px"><svg viewBox="0 0 16 16"><path d="M4 0.6h7.4L15 4.2V15.4H4z" fill="#fbfdff" stroke="#4a78c8" stroke-width="0.9"/><path d="M11.2 0.8v3.6h3.6" fill="#c8d8f4" stroke="#4a78c8" stroke-width="0.7"/><path d="M7.6 6h5.6M7.6 8h5.6M7.6 10h5.6M6 12.2h7.2" stroke="#3a68c8" stroke-width="1"/><circle cx="4.2" cy="7" r="3.9" fill="#cc1a22"/><circle cx="3" cy="5.6" r="1.5" fill="#f29a9a"/></svg><span class="t" style="left:34px">在符号中跟随<i class="lat acc">(F)</i></span></div><div class="mi" style="top:87px"><svg viewBox="0 0 16 16"><g><rect x="6" y="0.6" width="9.6" height="10" rx="0.8" fill="#3c3c3c"/><rect x="7.6" y="1" width="6.6" height="4" fill="#e8eef0"/><rect x="8.4" y="7.2" width="5" height="3.4" fill="#bbb"/></g><g><rect x="0.4" y="5.4" width="10.6" height="10.2" rx="0.8" fill="#3c3c3c" stroke="#f0f0f0" stroke-width="0.5"/><rect x="2" y="5.8" width="7.4" height="4.4" fill="#e8eef0"/><rect x="2.8" y="12" width="5.6" height="3.6" fill="#c4c4c4"/><rect x="3.6" y="12.6" width="1.6" height="2.6" fill="#3c3c3c"/></g></svg><span class="t" style="left:34px">将内存转储到文件<i class="lat acc">(D)</i></span></div><div class="mi" style="top:116px"><svg viewBox="0 0 16 16"><path d="M8.6 0.8C12.8 0.8 15.6 3 15.6 5.8c0 2-1.4 3.6-3.4 4.4l0.8 2.8-3.4-2.4C5.2 10.8 1.6 8.8 1.6 5.8 1.6 3 4.4 0.8 8.6 0.8z" fill="#f3e7a4" stroke="#c9b56a" stroke-width="0.7"/><path d="M3 4.4Q8 1.6 14 4" stroke="#fbf6d8" stroke-width="1.2" fill="none"/><path d="M2.2 9.6h2.2v2.2h2.2v2.2H4.4v2.2H2.2V14H0v-2.2h2.2z" fill="#25a836" stroke="#117a22" stroke-width="0.4"/></svg><span class="t" style="left:34px">注释<i class="lat acc">(C)</i></span><span class="sc" style="left:219px"><i class="lat">;</i></span></div><div class="mi" style="top:145px"><svg viewBox="0 0 16 16"><path d="M4.4 0.6h7.2L15 4v10.8H4.4z" fill="#e9eff3" stroke="#b4c2cc" stroke-width="0.8"/><path d="M11.4 0.8V4.2h3.4" fill="#d4dde4" stroke="#b4c2cc" stroke-width="0.6"/><circle cx="7.6" cy="9" r="3.2" fill="#cfe3f6" stroke="#8ea6bc" stroke-width="1.1"/><circle cx="7" cy="8.4" r="1.4" fill="#eef6ff"/><path d="M5.2 11.4L1 15.4" stroke="#9aa8b4" stroke-width="1.8" stroke-linecap="round"/></svg><span class="t" style="left:34px">查找特征码<i class="lat acc">(F)</i><i class="lat">...</i></span><span class="sc" style="left:219px"><i class="lat">Ctrl+B</i></span></div><div class="mi" style="top:174px"><svg viewBox="0 0 16 16"><rect x="0.6" y="0.6" width="8.8" height="8.8" fill="#f4f4f4" stroke="#a8a8a8" stroke-width="1"/><rect x="2.4" y="2.4" width="4.4" height="4.4" fill="#fff" stroke="#c0c0c0" stroke-width="0.8"/><rect x="6.6" y="6.6" width="8.8" height="8.8" fill="#f0f0f0" stroke="#a8a8a8" stroke-width="1"/><rect x="8.4" y="8.4" width="5.2" height="5.2" fill="#1e1e1e"/><path d="M11.4 2.4q2.6 0 3 2.6M11.2 2.4l1.6-1.4M11.2 2.4l1.6 1.4" stroke="#3a5ed8" stroke-width="1" fill="none"/><path d="M4.6 13.6q-2.6 0-3-2.6M4.8 13.6l-1.6-1.4M4.8 13.6l-1.6 1.4" stroke="#3a5ed8" stroke-width="1" fill="none"/></svg><span class="t" style="left:34px"><i class="lat">Region view</i></span></div><div class="mi" style="top:203px"><svg viewBox="0 0 16 16"><path d="M2.6 0.8h3v2h0.8v3.4h3.2V2.8h0.8v-2h3v2.6l1.8 5v6.6H9.6V9.6H6.4v5.4H0.8V8.4l1.8-5z" fill="#3e3e3e"/><rect x="1.2" y="12" width="4.8" height="2.6" fill="#585858"/><rect x="10" y="12" width="4.8" height="2.6" fill="#585858"/><rect x="3" y="1.2" width="2.2" height="1.2" fill="#6a6a6a"/><rect x="10.8" y="1.2" width="2.2" height="1.2" fill="#6a6a6a"/></svg><span class="t" style="left:34px">查找对区域的引用</span></div><div class="ms" style="top:236px"></div><div class="mi" style="top:241px"><svg viewBox="0 0 16 16"><rect x="0" y="0" width="16" height="7" fill="#2a862a"/><rect x="0.5" y="0.5" width="15" height="6" fill="#45a03e"/><rect x="1.8" y="1.6" width="3.2" height="3" fill="#262626"/><rect x="6.4" y="1.6" width="3.2" height="3" fill="#262626"/><rect x="11" y="1.6" width="3.2" height="3" fill="#262626"/><path d="M1 6h1.2v2H1zM3.4 6h1.2v2H3.4zM5.8 6h1.2v2H5.8zM8.2 6h1.2v2H8.2zM10.6 6h1.2v2h-1.2zM13 6h1.2v2H13z" fill="#ecd868"/><path d="M10.6 10h2.2v2.2H15v2.2h-2.2v2.2h-2.2v-2.2H8.4v-2.2h2.2z" transform="translate(0,-0.8)" fill="#25a836" stroke="#117a22" stroke-width="0.4"/></svg><span class="t" style="left:34px">分配内存<i class="lat acc">(A)</i></span></div><div class="mi" style="top:270px"><svg viewBox="0 0 16 16"><rect x="0" y="0" width="16" height="7" fill="#2a862a"/><rect x="0.5" y="0.5" width="15" height="6" fill="#45a03e"/><rect x="1.8" y="1.6" width="3.2" height="3" fill="#262626"/><rect x="6.4" y="1.6" width="3.2" height="3" fill="#262626"/><rect x="11" y="1.6" width="3.2" height="3" fill="#262626"/><path d="M1 6h1.2v2H1zM3.4 6h1.2v2H3.4zM5.8 6h1.2v2H5.8zM8.2 6h1.2v2H8.2zM10.6 6h1.2v2h-1.2zM13 6h1.2v2H13z" fill="#ecd868"/><rect x="8.4" y="11.6" width="6.8" height="2.6" rx="0.8" fill="#d03a3a" stroke="#a01c1c" stroke-width="0.4"/></svg><span class="t" style="left:34px">释放内存<i class="lat acc">(F)</i></span></div><div class="mi" style="top:299px"><svg viewBox="0 0 16 16"><path d="M1 9.2C1 8 2 7.4 2.8 7.2L4.4 3.8Q4.8 3 5.8 3h5q1 0 1.4.8l1.2 3.4C14.6 7.4 15.6 8 15.6 9.2V13H1z" fill="#4f86cc" stroke="#2f5a9c" stroke-width="0.6"/><path d="M4 7L5.2 4.2h5.8L12 7z" fill="#c8d4e0"/><rect x="1.4" y="12.6" width="3" height="2.4" rx="0.6" fill="#222"/><rect x="12" y="12.6" width="3" height="2.4" rx="0.6" fill="#222"/><rect x="1.2" y="9" width="2.4" height="1.6" fill="#f6b63a"/><rect x="13" y="9" width="2.4" height="1.6" fill="#f6b63a"/><rect x="6.6" y="9.2" width="3.2" height="1.4" fill="#f0d878"/><rect x="6.4" y="12" width="3.6" height="1.2" fill="#eee"/><path d="M8.6 2.6h4.2V0.6L16 3.4 12.8 6.2V4.4H8.6z" fill="#3f8ff0" stroke="#1f5fc0" stroke-width="0.4"/></svg><span class="t" style="left:34px">转到</span><b class="ar"></b></div><div class="ms" style="top:332px"></div><div class="mi" style="top:337px"><svg viewBox="0 0 16 16"><rect x="0" y="0" width="16" height="7" fill="#2a862a"/><rect x="0.5" y="0.5" width="15" height="6" fill="#45a03e"/><rect x="1.8" y="1.6" width="3.2" height="3" fill="#262626"/><rect x="6.4" y="1.6" width="3.2" height="3" fill="#262626"/><rect x="11" y="1.6" width="3.2" height="3" fill="#262626"/><path d="M1 6h1.2v2H1zM3.4 6h1.2v2H3.4zM5.8 6h1.2v2H5.8zM8.2 6h1.2v2H8.2zM10.6 6h1.2v2h-1.2zM13 6h1.2v2H13z" fill="#ecd868"/><path d="M8.4 12.4l1.4-1.2 1.6 1.8 3.2-4 1.4 1.2-4.6 5.4z" fill="#2cb03c" stroke="#15802a" stroke-width="0.3"/></svg><span class="t" style="left:34px">设置内存保护权限</span></div><div class="ms" style="top:370px"></div><div class="mi hl" style="top:375px"><svg viewBox="0 0 16 16"><circle cx="8" cy="8" r="3.6" fill="#c8161e"/><circle cx="7" cy="7" r="1.4" fill="#ee6a6a"/></svg><span class="t" style="left:34px">内存断点<i class="lat acc">(B)</i></span><b class="ar"></b></div><div class="ms" style="top:408px"></div><div class="mi" style="top:413px"><svg viewBox="0 0 16 16"><path d="M1.4 0.8h5.8L9.6 3.2V11.6H1.4z" fill="#f6fafa" stroke="#94a6a6" stroke-width="0.9"/><path d="M5.6 4.2h5.8L13.8 6.6V15H5.6z" fill="#f8fbfb" stroke="#889c9c" stroke-width="0.9"/><path d="M11.4 4.4v2.4h2.2" fill="#dde6e6" stroke="#9aabab" stroke-width="0.6"/></svg><span class="t" style="left:34px">复制<i class="lat acc">(C)</i></span><b class="ar"></b></div></div>
<div class="menu" id="m1" style="left:1028px;top:769px;width:126px;height:130px"><div class="gut" style="left:27px"></div><div class="mi" style="top:0px"><svg viewBox="0 0 16 16"><rect x="0" y="0" width="10" height="5" fill="#1f8a1f"/><path d="M1.2 1.8h1.2v3.2H1.2zM4.2 1.8h1.2v3.2H4.2zM7.2 1.8h1.2v3.2H7.2z" fill="#f0d870"/><circle cx="7.4" cy="7.4" r="3.5" fill="#c4141c"/><circle cx="7.4" cy="6.6" r="1.6" fill="#e86464"/><path d="M8.6 12.6l1.4-1.2 1.4 1.6 3-3.6 1.4 1.2-4.4 5z" fill="#2cb03c" stroke="#15802a" stroke-width="0.3"/></svg><span class="t" style="left:34px">存取</span><b class="ar"></b></div><div class="mi hl" style="top:29px"><svg viewBox="0 0 16 16"><rect x="0" y="0" width="10" height="5" fill="#1f8a1f"/><path d="M1.2 1.8h1.2v3.2H1.2zM4.2 1.8h1.2v3.2H4.2zM7.2 1.8h1.2v3.2H7.2z" fill="#f0d870"/><circle cx="7.4" cy="7.4" r="3.5" fill="#c4141c"/><circle cx="7.4" cy="6.6" r="1.6" fill="#e86464"/><circle cx="12.6" cy="9.8" r="2.6" fill="#dfeaf4" stroke="#9aa8b4" stroke-width="0.8"/><path d="M10.8 11.8L7.6 15.2" stroke="#8a8a8a" stroke-width="1.6" stroke-linecap="round"/></svg><span class="t" style="left:34px">读取</span><b class="ar"></b></div><div class="mi" style="top:58px"><svg viewBox="0 0 16 16"><rect x="0" y="0" width="10" height="5" fill="#1f8a1f"/><path d="M1.2 1.8h1.2v3.2H1.2zM4.2 1.8h1.2v3.2H4.2zM7.2 1.8h1.2v3.2H7.2z" fill="#f0d870"/><circle cx="7.4" cy="7.4" r="3.5" fill="#c4141c"/><circle cx="7.4" cy="6.6" r="1.6" fill="#e86464"/><path d="M14 7.6l1.6 1.6-5.6 5.6-2.2 0.8 0.6-2.4z" fill="#f0c83c" stroke="#a8842a" stroke-width="0.4"/><path d="M14 7.6l1.6 1.6-1 1-1.6-1.6z" fill="#e86a6a"/><path d="M7.8 15.6l0.6-2.2 1.6 1.6z" fill="#333"/></svg><span class="t" style="left:34px">写入</span><b class="ar"></b></div></div>
<div class="menu" id="m2" style="left:1147px;top:801px;width:152px;height:64px"><div class="gut" style="left:27px"></div><div class="mi hl" style="top:0px"><svg viewBox="0 0 16 16"><rect x="0" y="0" width="10" height="5" fill="#1f8a1f"/><path d="M1.2 1.8h1.2v3.2H1.2zM4.2 1.8h1.2v3.2H4.2zM7.2 1.8h1.2v3.2H7.2z" fill="#f0d870"/><circle cx="7.4" cy="7.4" r="3.5" fill="#c4141c"/><circle cx="7.4" cy="6.6" r="1.6" fill="#e86464"/><text x="13" y="15.6" font-family="Liberation Sans,sans-serif" font-size="7.5" font-weight="bold" fill="#c4141c" text-anchor="middle">1</text></svg><span class="t" style="left:34px">一次性<i class="lat acc">(S)</i></span></div><div class="mi" style="top:29px"><svg viewBox="0 0 16 16"><rect x="0" y="0" width="10" height="5" fill="#1f8a1f"/><path d="M1.2 1.8h1.2v3.2H1.2zM4.2 1.8h1.2v3.2H4.2zM7.2 1.8h1.2v3.2H7.2z" fill="#f0d870"/><circle cx="7.4" cy="7.4" r="3.5" fill="#c4141c"/><circle cx="7.4" cy="6.6" r="1.6" fill="#e86464"/><path d="M10.4 12.4a2.5 2.5 0 0 1 4.2-1.6" stroke="#3a4ee0" stroke-width="1.1" fill="none"/><path d="M15.4 9.2v2.4H13z" fill="#3a4ee0"/><path d="M15.2 13.4a2.5 2.5 0 0 1-4.2 1.6" stroke="#3a4ee0" stroke-width="1.1" fill="none"/><path d="M10.2 16v-2.4h2.4z" fill="#3a4ee0"/></svg><span class="t" style="left:34px">还原<i class="lat acc">(R)</i></span></div></div>

</body>
</html>
